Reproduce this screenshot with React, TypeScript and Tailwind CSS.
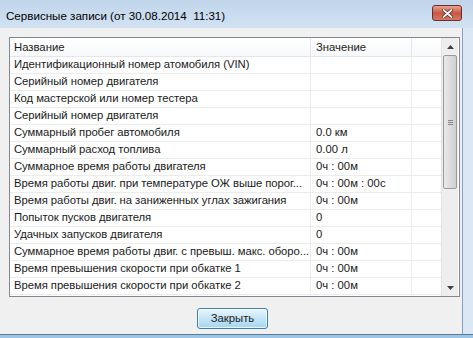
import React from 'react';

const rows: [string, string][] = [
  ['Идентификационный номер атомобиля (VIN)', ''],
  ['Серийный номер двигателя', ''],
  ['Код мастерской или номер тестера', ''],
  ['Серийный номер двигателя', ''],
  ['Суммарный пробег автомобиля', '0.0 км'],
  ['Суммарный расход топлива', '0.00 л'],
  ['Суммарное время работы двигателя', '0ч : 00м'],
  ['Время работы двиг. при температуре ОЖ выше порог...', '0ч : 00м : 00с'],
  ['Время работы двиг. на заниженных углах зажигания', '0ч : 00м'],
  ['Попыток пусков двигателя', '0'],
  ['Удачных запусков двигателя', '0'],
  ['Суммарное время работы двиг. с превыш. макс. оборо...', '0ч : 00м'],
  ['Время превышения скорости при обкатке 1', '0ч : 00м'],
  ['Время превышения скорости при обкатке 2', '0ч : 00м'],
];

export default function App() {
  return (
    <div className="w-[473px] h-[338px] flex flex-col bg-[#dbe7f4] overflow-hidden text-[11.3px] text-[#1a1a1a]" style={{ fontFamily: '"Liberation Sans", Arial, sans-serif' }}>
      {/* Title bar */}
      <div className="h-[28px] flex items-start bg-gradient-to-b from-[#c0d4ea] to-[#d2e2f3]">
        <div className="pl-[6px] pt-[7px] text-[11.6px] text-black">Сервисные записи (от 30.08.2014&nbsp;&nbsp;11:31)</div>
        <div className="ml-auto mr-[11px] mt-[5px] w-[30px] h-[16px] rounded-[3px] border border-[#6e2b2b] bg-gradient-to-b from-[#e8a493] via-[#c8553f] to-[#d07a66] flex items-center justify-center">
          <svg width="11" height="9" viewBox="0 0 11 9">
            <path d="M1.5 1 L9.5 8 M9.5 1 L1.5 8" stroke="#5a1a1a" strokeWidth="3.2" strokeLinecap="round" />
            <path d="M1.5 1 L9.5 8 M9.5 1 L1.5 8" stroke="#ffffff" strokeWidth="1.8" strokeLinecap="round" />
          </svg>
        </div>
      </div>

      <div className="flex flex-1 min-h-0">
        {/* Client area */}
        <div className="w-[463px] bg-[#f0f0f0] border-r border-[#8a9fb8] flex flex-col pt-[9px] pl-[9px]">
          <div className="w-[451px] h-[260px] border border-[#828790] bg-white flex">
            <div className="w-[431px] flex flex-col">
              {/* Header */}
              <div className="h-[19px] flex border-b border-[#e3e6ea] bg-gradient-to-b from-white to-[#f7f8fa]">
                <div className="w-[301px] pl-[4px] flex items-center border-r border-[#e3e6ea]">Название</div>
                <div className="w-[101px] pl-[5px] flex items-center border-r border-[#e3e6ea]">Значение</div>
                <div className="flex-1" />
              </div>
              {rows.map(([name, value], i) => (
                <div key={i} className="h-[17px] flex border-b border-[#ececec] leading-none">
                  <div className="w-[301px] pl-[4px] flex items-center border-r border-[#ececec] whitespace-nowrap overflow-hidden tracking-[-0.05px]">{name}</div>
                  <div className="w-[101px] pl-[5px] flex items-center border-r border-[#ececec] whitespace-nowrap">{value}</div>
                  <div className="flex-1" />
                </div>
              ))}
            </div>
            {/* Scrollbar */}
            <div className="w-[17px] flex flex-col bg-[#eeeeee] border-l border-[#e3e3e3]">
              <div className="h-[17px] flex items-center justify-center">
                <svg width="7" height="4" viewBox="0 0 7 4"><path d="M0 4 L3.5 0 L7 4 Z" fill="#404040" /></svg>
              </div>
              <div className="mx-[1px] h-[134px] rounded-[2px] border border-[#9a9a9a] bg-gradient-to-r from-[#eaeaea] via-[#dcdcdc] to-[#cfcfcf] flex items-center justify-center">
                <div className="flex flex-col gap-[1px]">
                  <div className="w-[5px] h-[1px] bg-[#888]" />
                  <div className="w-[5px] h-[1px] bg-[#888]" />
                  <div className="w-[5px] h-[1px] bg-[#888]" />
                </div>
              </div>
              <div className="flex-1" />
              <div className="h-[17px] flex items-center justify-center">
                <svg width="7" height="4" viewBox="0 0 7 4"><path d="M0 0 L3.5 4 L7 0 Z" fill="#404040" /></svg>
              </div>
            </div>
          </div>
          <div className="flex mt-[11px]">
            <div className="ml-[188px] w-[71px] h-[21px] rounded-[3px] border border-[#3c7fb1] bg-gradient-to-b from-[#eaf6fd] via-[#c4e5f6] to-[#a6d5f0] shadow-[inset_0_0_0_1px_rgba(255,255,255,0.7)] flex items-center justify-center">
              Закрыть
            </div>
          </div>
        </div>
        <div className="flex-1" />
      </div>
      {/* Bottom frame */}
      <div className="h-[4px] border-t border-[#5a7a9a] bg-[#9cc5e6]" />
    </div>
  );
}
